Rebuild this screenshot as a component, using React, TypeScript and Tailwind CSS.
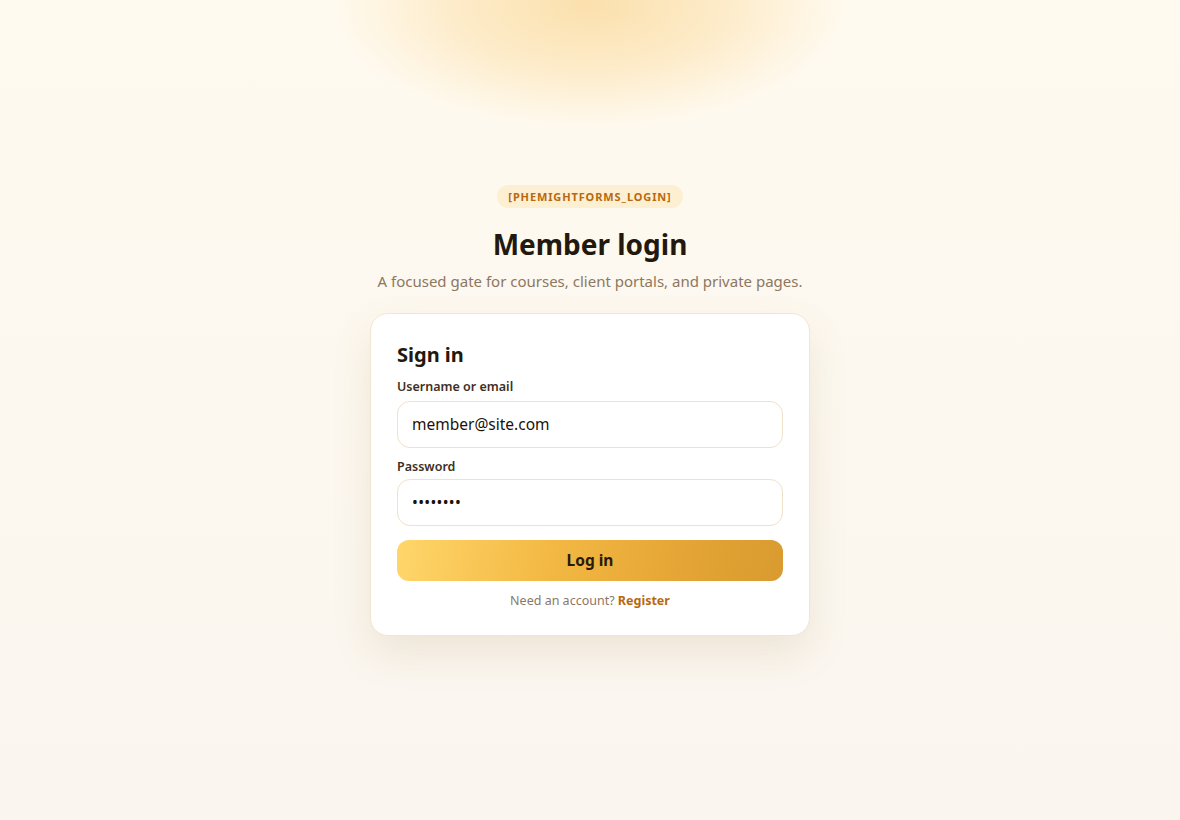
export default function App() {
  return (
    <div
      className="relative min-h-[820px] w-full overflow-hidden bg-gradient-to-b from-[#fffaef] to-[#faf6ef]"
      style={{ fontFamily: '"Noto Sans", "Open Sans", sans-serif' }}
    >
      {/* top glow */}
      <div className="pointer-events-none absolute left-1/2 top-[-120px] h-[250px] w-[520px] -translate-x-1/2 rounded-full bg-[radial-gradient(ellipse_at_center,#fbe0ad_0%,#fdebc8_35%,rgba(255,248,234,0)_70%)]" />

      <div className="relative flex flex-col items-center pt-[185px]">
        <span className="rounded-full bg-[#fdf0d2] px-[11px] py-[4px] text-[11px] font-bold leading-[15px] tracking-[0.08em] text-[#b8690f]">
          [PHEMIGHTFORMS_LOGIN]
        </span>
        <h1 className="mt-[18px] text-[28px] font-bold leading-[36px] text-[#22180d]">Member login</h1>
        <p className="mt-[8px] text-[15px] leading-[22px] text-[#8c7761]">
          A focused gate for courses, client portals, and private pages.
        </p>

        <div className="mt-[21px] w-[440px] rounded-[18px] border border-[#f1e6d2] bg-white px-[26px] pb-[25px] pt-[28px] shadow-[0_18px_40px_rgba(140,100,40,0.12)]">
          <h2 className="text-[20px] font-bold leading-[26px] text-[#22180d]">Sign in</h2>

          <label className="mt-[10px] block text-[12.5px] font-semibold leading-[18px] text-[#3f2f1e]">
            Username or email
          </label>
          <div className="mt-[5px] flex h-[47px] items-center rounded-[13px] border border-[#eee2cb] bg-white px-[14px] text-[15.5px] text-[#1b1208]">
            member@site.com
          </div>

          <label className="mt-[10px] block text-[12.5px] font-semibold leading-[18px] text-[#3f2f1e]">
            Password
          </label>
          <div className="mt-[3px] flex h-[47px] items-center rounded-[13px] border border-[#eee2cb] bg-white px-[14px] text-[15.5px] tracking-[0.02em] text-[#1b1208]">
            ••••••••
          </div>

          <button className="mt-[14px] flex h-[41px] w-full items-center justify-center rounded-[12px] bg-[linear-gradient(100deg,#ffd66b_0%,#f3b843_40%,#e6a737_70%,#d99a2f_100%)] text-[15.5px] font-bold text-[#2a1a0a]">
            Log in
          </button>

          <p className="mt-[11px] text-center text-[12.5px] leading-[18px] text-[#8a7866]">
            Need an account? <span className="font-bold text-[#b8690f]">Register</span>
          </p>
        </div>
      </div>
    </div>
  )
}
